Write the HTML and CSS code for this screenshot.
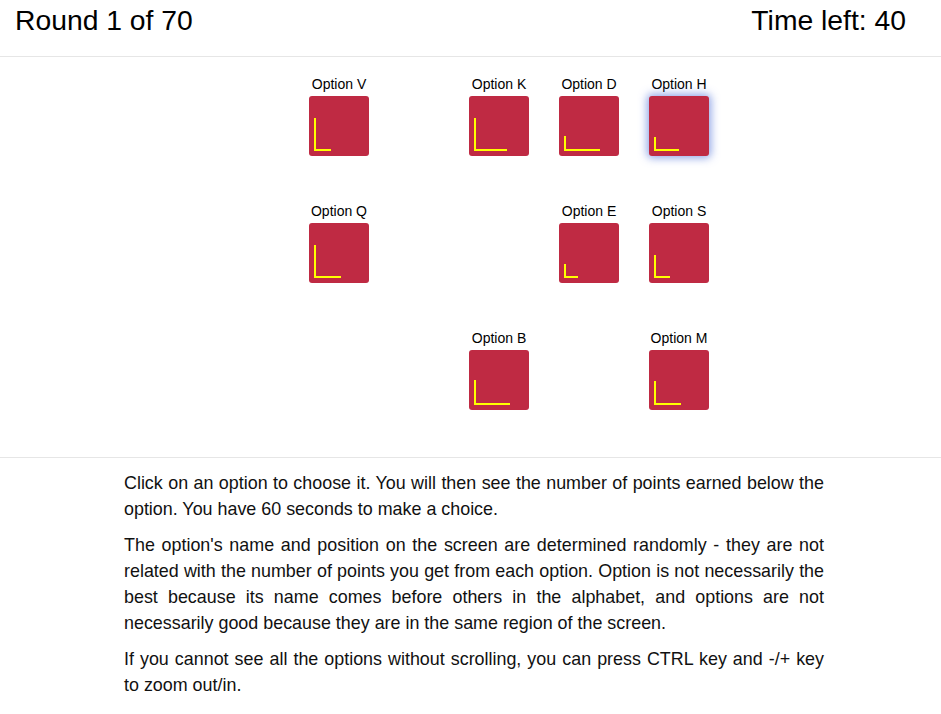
FILE: index.html
```html
<!DOCTYPE html>
<html lang="en">
<head>
<meta charset="utf-8">
<title>Round 1 of 70</title>
<link rel="stylesheet" href="styles.css">
</head>
<body>
<header class="top-bar">
  <div class="round">Round 1 of 70</div>
  <div class="timer">Time left: 40</div>
</header>

<section class="board">
  <div class="grid">
    <div class="opt c1 r1"><div class="label">Option V</div><div class="box"><svg viewBox="0 0 60 60"><path d="M6 22V54H22"/></svg></div></div>
    <div class="opt c3 r1"><div class="label">Option K</div><div class="box"><svg viewBox="0 0 60 60"><path d="M6 22V54H38"/></svg></div></div>
    <div class="opt c4 r1"><div class="label">Option D</div><div class="box"><svg viewBox="0 0 60 60"><path d="M6 40V54H41"/></svg></div></div>
    <div class="opt c5 r1"><div class="label">Option H</div><div class="box selected"><svg viewBox="0 0 60 60"><path d="M6 41V54H30"/></svg></div></div>

    <div class="opt c1 r2"><div class="label">Option Q</div><div class="box"><svg viewBox="0 0 60 60"><path d="M6 22V54H32"/></svg></div></div>
    <div class="opt c4 r2"><div class="label">Option E</div><div class="box"><svg viewBox="0 0 60 60"><path d="M6 41V54H19"/></svg></div></div>
    <div class="opt c5 r2"><div class="label">Option S</div><div class="box"><svg viewBox="0 0 60 60"><path d="M6 32V54H21"/></svg></div></div>

    <div class="opt c3 r3"><div class="label">Option B</div><div class="box"><svg viewBox="0 0 60 60"><path d="M6 30V54H41"/></svg></div></div>
    <div class="opt c5 r3"><div class="label">Option M</div><div class="box"><svg viewBox="0 0 60 60"><path d="M6 31V54H32"/></svg></div></div>
  </div>
</section>

<section class="instructions">
  <p>Click on an option to choose it. You will then see the number of points earned below the option. You have 60 seconds to make a choice.</p>
  <p>The option's name and position on the screen are determined randomly - they are not related with the number of points you get from each option. Option is not necessarily the best because its name comes before others in the alphabet, and options are not necessarily good because they are in the same region of the screen.</p>
  <p>If you cannot see all the options without scrolling, you can press CTRL key and -/+ key to zoom out/in.</p>
</section>
</body>
</html>
```
FILE: styles.css
```css
html, body {
  margin: 0;
  padding: 0;
  background: #fff;
}

body {
  font-family: "Liberation Sans", Arial, sans-serif;
  color: #000;
}

.top-bar {
  display: flex;
  justify-content: space-between;
  align-items: flex-start;
  height: 52px;
  padding: 4px 35px 0 15px;
  border-bottom: 1px solid #e6e6e6;
  font-size: 28.3px;
  line-height: 32px;
}

.board {
  padding: 17px 0 47px 0;
  border-bottom: 1px solid #e6e6e6;
}

.grid {
  display: grid;
  grid-template-columns: 60px 40px 60px 60px 60px;
  grid-template-rows: 82px 82px 82px;
  column-gap: 30px;
  row-gap: 45px;
  margin-left: 309px;
  width: 400px;
}

.c1 { grid-column: 1; }
.c3 { grid-column: 3; }
.c4 { grid-column: 4; }
.c5 { grid-column: 5; }
.r1 { grid-row: 1; }
.r2 { grid-row: 2; }
.r3 { grid-row: 3; }

.opt {
  display: flex;
  flex-direction: column;
  align-items: center;
  width: 60px;
}

.label {
  font-size: 14px;
  line-height: 20px;
  height: 20px;
  white-space: nowrap;
  text-align: center;
}

.box {
  margin-top: 2px;
  width: 60px;
  height: 60px;
  background: #bf2a43;
  border-radius: 3px;
}

.box svg {
  display: block;
  width: 60px;
  height: 60px;
}

.box path {
  fill: none;
  stroke: #ffff00;
  stroke-width: 2;
  stroke-linecap: butt;
  stroke-linejoin: miter;
}

.box.selected {
  box-shadow: 0 0 8px 2px rgba(70, 105, 215, 0.6);
}

.instructions {
  width: 700px;
  margin-left: 124px;
  padding-top: 13px;
  font-size: 17.9px;
  line-height: 25.7px;
  color: #111;
}

.instructions p {
  margin: 0 0 11px 0;
  text-align: justify;
}
```
